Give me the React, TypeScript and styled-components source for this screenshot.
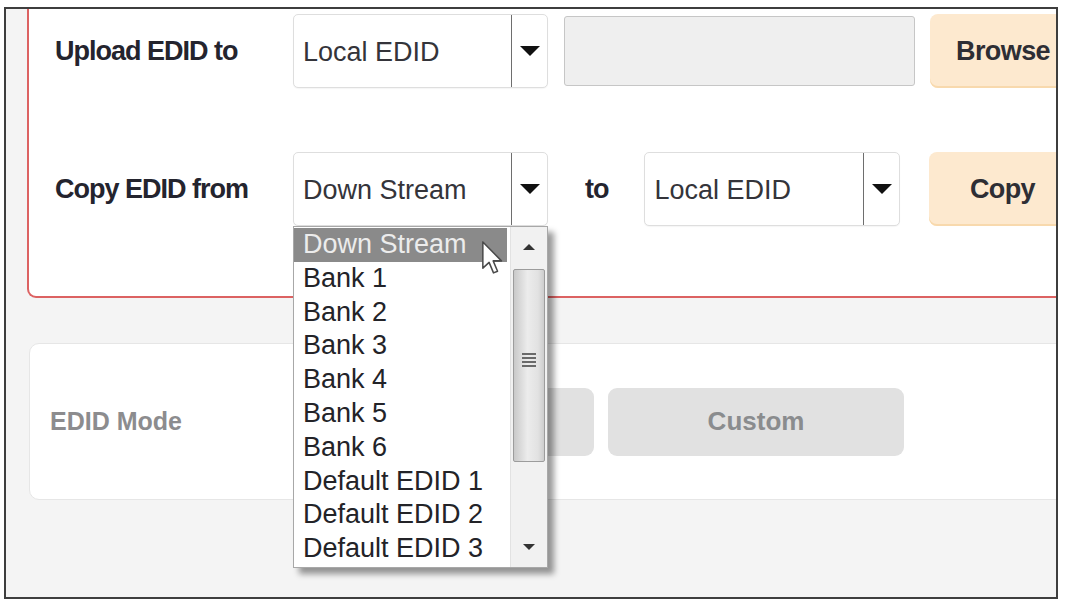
import React from "react";
import styled, { createGlobalStyle } from "styled-components";

const Global = createGlobalStyle`
  html, body { margin: 0; padding: 0; background: #ffffff; }
  body { font-family: "Liberation Sans", Arial, sans-serif; }
  * { box-sizing: border-box; }
`;

const Page = styled.div`
  padding: 7px 0 0 4px;
  width: 1065px;
  height: 604px;
`;

const Frame = styled.div`
  position: relative;
  width: 1054px;
  height: 592px;
  border: 2px solid #3e3e3e;
  background: #f4f4f4;
  overflow: hidden;
  padding-left: 21px;
`;

const RedCard = styled.div`
  width: 1100px;
  background: #ffffff;
  border: 2px solid #dc6262;
  border-top: none;
  border-radius: 0 0 9px 9px;
  padding: 5px 0 70px 26px;
  display: flex;
  flex-direction: column;
  gap: 64px;
`;

const Row = styled.div`
  display: flex;
  align-items: center;
  height: 74px;
`;

const Label = styled.div<{ $w: number }>`
  width: ${(p) => p.$w}px;
  flex: none;
  font-weight: bold;
  font-size: 27px;
  letter-spacing: -1px;
  color: #24242e;
  white-space: nowrap;
  padding-top: 1px;
`;

const SelectWrap = styled.div<{ $w: number }>`
  position: relative;
  flex: none;
  width: ${(p) => p.$w}px;
  height: 74px;
  display: flex;
  background: #ffffff;
  border: 1px solid #dedede;
  border-radius: 5px;
  box-shadow: 0 1px 1px rgba(0, 0, 0, 0.04);
`;

const SelectText = styled.div`
  flex: 1;
  display: flex;
  align-items: center;
  padding: 2px 0 0 9px;
  font-size: 27px;
  color: #34343a;
  border-right: 1px solid #6e6e6e;
  white-space: nowrap;
`;

const ArrowBox = styled.div`
  width: 35px;
  flex: none;
  display: flex;
  align-items: center;
  justify-content: center;
`;

const Caret = styled.div`
  width: 0;
  height: 0;
  border-left: 10px solid transparent;
  border-right: 10px solid transparent;
  border-top: 10px solid #111111;
`;

const TextInput = styled.div`
  flex: none;
  width: 351px;
  height: 70px;
  margin-left: 16px;
  background: #efefef;
  border: 1px solid #c6c6c6;
  border-radius: 3px;
`;

const ActionButton = styled.div<{ $ml: number }>`
  flex: none;
  width: 146px;
  height: 74px;
  margin-left: ${(p) => p.$ml}px;
  background: #fde9cf;
  border-radius: 8px;
  box-shadow: inset 0 -2px 0 #f8d9ad;
  display: flex;
  align-items: center;
  justify-content: center;
  font-weight: bold;
  font-size: 27px;
  letter-spacing: -0.6px;
  color: #2e2e34;
`;

const ToLabel = styled.div`
  flex: none;
  margin: 0 36px 0 37px;
  font-weight: bold;
  font-size: 27px;
  letter-spacing: -1px;
  color: #24242e;
`;

const ListBox = styled.div`
  position: absolute;
  left: -1px;
  top: 73px;
  width: 255px;
  height: 342px;
  z-index: 5;
  display: flex;
  background: #ffffff;
  border: 1px solid #a8a8a8;
  box-shadow: 6px 6px 6px rgba(0, 0, 0, 0.4);
`;

const Items = styled.div`
  flex: 1;
  display: flex;
  flex-direction: column;
  padding-top: 1px;
`;

const Item = styled.div<{ $active?: boolean }>`
  height: 33.8px;
  line-height: 33.8px;
  padding-left: 9px;
  margin-right: 3px;
  font-size: 27px;
  white-space: nowrap;
  color: ${(p) => (p.$active ? "#ececec" : "#232328")};
  background: ${(p) => (p.$active ? "#8a8a8a" : "transparent")};
`;

const ScrollBar = styled.div`
  width: 37px;
  flex: none;
  display: flex;
  flex-direction: column;
  background: #f1f1f1;
  border-left: 1px solid #e2e2e2;
`;

const ScrollBtn = styled.div`
  height: 40px;
  flex: none;
  display: flex;
  align-items: center;
  justify-content: center;
`;

const SmallTri = styled.div<{ $up?: boolean }>`
  width: 0;
  height: 0;
  border-left: 6px solid transparent;
  border-right: 6px solid transparent;
  ${(p) => (p.$up ? "border-bottom: 6px solid #333;" : "border-top: 6px solid #333;")}
`;

const Thumb = styled.div`
  height: 193px;
  margin: 2px 2px 0 2px;
  flex: none;
  border: 1px solid #9c9c9c;
  border-radius: 2px;
  background: linear-gradient(to right, #c9c9c9, #ececec 45%, #e2e2e2 80%, #cdcdcd);
  display: flex;
  align-items: center;
  justify-content: center;
`;

const Grip = styled.div`
  width: 14px;
  height: 14px;
  background: repeating-linear-gradient(
    to bottom,
    #6a6a6a 0,
    #6a6a6a 2px,
    transparent 2px,
    transparent 4px
  );
  margin-top: -12px;
`;

const Track = styled.div`
  flex: 1;
`;

const Cursor = styled.svg`
  position: absolute;
  left: 188px;
  top: 14px;
  z-index: 6;
`;

const ModeCard = styled.div`
  margin: 45px 0 0 2px;
  width: 1100px;
  height: 157px;
  background: #ffffff;
  border: 1px solid #e6e6e6;
  border-radius: 10px;
  display: flex;
  align-items: center;
  padding-left: 20px;
`;

const ModeLabel = styled.div`
  width: 248px;
  flex: none;
  font-weight: bold;
  font-size: 25px;
  color: #8c8c8e;
`;

const ModeButton = styled.div<{ $ml?: number }>`
  flex: none;
  width: 296px;
  height: 68px;
  margin-left: ${(p) => p.$ml ?? 0}px;
  background: #e1e1e1;
  border-radius: 9px;
  display: flex;
  align-items: center;
  justify-content: center;
  font-weight: bold;
  font-size: 26px;
  color: #8a8c8e;
`;

const options = [
  "Down Stream",
  "Bank 1",
  "Bank 2",
  "Bank 3",
  "Bank 4",
  "Bank 5",
  "Bank 6",
  "Default EDID 1",
  "Default EDID 2",
  "Default EDID 3",
];

const Select: React.FC<{ value: string; w: number; children?: React.ReactNode }> = ({ value, w, children }) => (
  <SelectWrap $w={w}>
    <SelectText>{value}</SelectText>
    <ArrowBox>
      <Caret />
    </ArrowBox>
    {children}
  </SelectWrap>
);

export default function App() {
  return (
    <>
      <Global />
      <Page>
        <Frame>
          <RedCard>
            <Row>
              <Label $w={238}>Upload EDID to</Label>
              <Select value="Local EDID" w={255} />
              <TextInput />
              <ActionButton $ml={15}>Browse</ActionButton>
            </Row>
            <Row>
              <Label $w={238}>Copy EDID from</Label>
              <Select value="Down Stream" w={255}>
                <ListBox>
                  <Items>
                    {options.map((o, i) => (
                      <Item key={o} $active={i === 0}>
                        {o}
                      </Item>
                    ))}
                  </Items>
                  <ScrollBar>
                    <ScrollBtn>
                      <SmallTri $up />
                    </ScrollBtn>
                    <Thumb>
                      <Grip />
                    </Thumb>
                    <Track />
                    <ScrollBtn>
                      <SmallTri />
                    </ScrollBtn>
                  </ScrollBar>
                  <Cursor width="22" height="34" viewBox="0 0 13 20">
                    <path
                      d="M0.5 0.5 L0.5 16 L4.2 12.6 L6.8 18.8 L9.2 17.8 L6.6 11.7 L11.5 11.7 Z"
                      fill="#ffffff"
                      stroke="#4a4a4a"
                      strokeWidth="0.9"
                      strokeLinejoin="round"
                    />
                  </Cursor>
                </ListBox>
              </Select>
              <ToLabel>to</ToLabel>
              <Select value="Local EDID" w={256} />
              <ActionButton $ml={29}>Copy</ActionButton>
            </Row>
          </RedCard>
          <ModeCard>
            <ModeLabel>EDID Mode</ModeLabel>
            <ModeButton>Auto</ModeButton>
            <ModeButton $ml={14}>Custom</ModeButton>
          </ModeCard>
        </Frame>
      </Page>
    </>
  );
}
